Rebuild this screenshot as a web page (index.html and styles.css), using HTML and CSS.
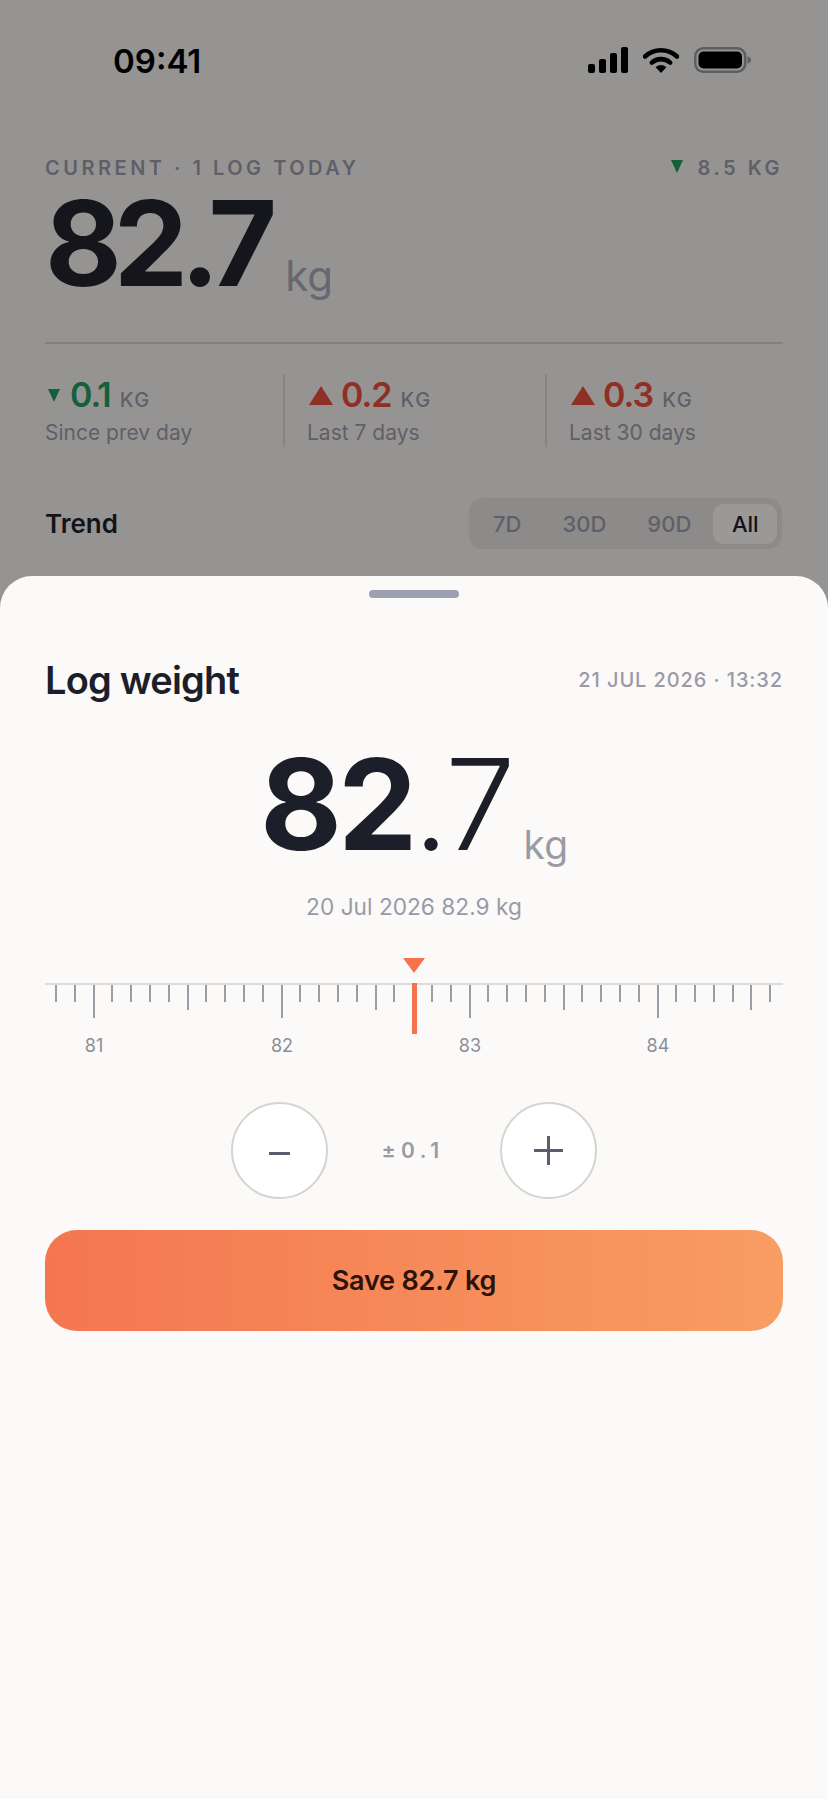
FILE: index.html
```html
<!DOCTYPE html>
<html lang="en">
  <head>
    <meta charset="UTF-8" />
    <meta name="viewport" content="width=device-width, initial-scale=1.0" />
    <title>Log weight</title>
    <link rel="stylesheet" href="styles.css">
  </head>
  <body>
    <div class="behind">
      <div class="status">
        <span class="time">09:41</span>
        <div class="status-icons">
          <svg class="signal" width="40" height="26" viewBox="0 0 40 26">
            <rect x="0" y="17" width="7" height="9" rx="2" />
            <rect x="11" y="12" width="7" height="14" rx="2" />
            <rect x="22" y="6" width="7" height="20" rx="2" />
            <rect x="33" y="0" width="7" height="26" rx="2" />
          </svg>
          <svg class="wifi" width="36" height="26" viewBox="0 0 36 26">
            <path d="M2 9.5C11 1.2 25 1.2 34 9.5" fill="none" stroke="#000" stroke-width="4.6" stroke-linecap="round" />
            <path d="M8.8 15.6C14 11 22 11 27.2 15.6" fill="none" stroke="#000" stroke-width="4.6" stroke-linecap="round" />
            <path d="M12.6 20.2C16 17.2 20 17.2 23.4 20.2L18 26Z" />
          </svg>
          <svg class="battery" width="57" height="26" viewBox="0 0 57 26">
            <rect x="1.25" y="1.25" width="50" height="23.5" rx="8" fill="none" stroke="#5e5e5e" stroke-width="2.5" />
            <rect x="4.5" y="4.5" width="43.5" height="17" rx="5" />
            <path d="M53.5 9.5C56 10 57 11.5 57 13C57 14.5 56 16 53.5 16.5Z" fill="#5e5e5e" />
          </svg>
        </div>
      </div>

      <div class="current-head">
        <span class="eyebrow">CURRENT · 1 LOG TODAY</span>
        <span class="eyebrow goal"><i class="tri-down small"></i>8.5 KG</span>
      </div>
      <div class="current">
        <span class="current-value">82.7</span><span class="current-unit">kg</span>
      </div>

      <div class="stats">
        <div class="stat">
          <div class="stat-value down"><i class="tri-down"></i>0.1<span class="stat-unit">KG</span></div>
          <div class="stat-label">Since prev day</div>
        </div>
        <div class="stat">
          <div class="stat-value up"><i class="tri-up"></i>0.2<span class="stat-unit">KG</span></div>
          <div class="stat-label">Last 7 days</div>
        </div>
        <div class="stat">
          <div class="stat-value up"><i class="tri-up"></i>0.3<span class="stat-unit">KG</span></div>
          <div class="stat-label">Last 30 days</div>
        </div>
      </div>

      <div class="trend">
        <span class="trend-title">Trend</span>
        <div class="range">
          <span>7D</span>
          <span>30D</span>
          <span>90D</span>
          <span class="active">All</span>
        </div>
      </div>
    </div>

    <div class="sheet">
      <div class="handle"></div>
      <div class="sheet-head">
        <h1>Log weight</h1>
        <span class="stamp">21 JUL 2026 · 13:32</span>
      </div>
      <div class="reading">
        <span class="whole">82</span><span class="fraction">.7</span><span class="reading-unit">kg</span>
      </div>
      <p class="previous">20 Jul 2026 82.9 kg</p>

      <div class="ruler">
        <i class="pointer-head"></i>
        <i class="pointer-bar"></i>
        <div class="ticks">
          <i></i><i></i><i class="long"></i><i></i><i></i><i></i><i></i><i class="mid"></i><i></i><i></i>
          <i></i><i></i><i class="long"></i><i></i><i></i><i></i><i></i><i class="mid"></i><i></i><i></i>
          <i></i><i></i><i class="long"></i><i></i><i></i><i></i><i></i><i class="mid"></i><i></i><i></i>
          <i></i><i></i><i class="long"></i><i></i><i></i><i></i><i></i><i class="mid"></i><i></i>
        </div>
        <div class="ruler-labels">
          <span>81</span>
          <span>82</span>
          <span>83</span>
          <span>84</span>
        </div>
      </div>

      <div class="stepper">
        <button class="step minus"><i></i></button>
        <span class="step-size">±0.1</span>
        <button class="step plus"><i></i><i></i></button>
      </div>

      <button class="save">Save 82.7 kg</button>
    </div>
  </body>
</html>
```

FILE: styles.css
```css
* {
  margin: 0;
  padding: 0;
  box-sizing: border-box;
}
html,
body {
  width: 100%;
  height: 100%;
  background: #959492;
  font-family: Inter, "Liberation Sans", sans-serif;
}
body {
  display: flex;
  flex-direction: column;
  height: 1799px;
  overflow: hidden;
}
i {
  display: block;
}
.behind {
  padding: 47px 45px 0;
  height: 576px;
  flex: none;
}
.status {
  display: flex;
  justify-content: space-between;
  height: 26px;
  padding-left: 68px;
}
.time {
  font-size: 33px;
  line-height: 28px;
  font-weight: 600;
  color: #000;
}
.status-icons {
  display: flex;
  gap: 15px;
  padding-right: 32px;
  margin-left: auto;
}
.eyebrow {
  font-size: 20px;
  line-height: 20px;
  font-weight: 600;
  letter-spacing: 3.5px;
  color: #5f5f69;
  display: flex;
  align-items: center;
}
.current-head {
  display: flex;
  justify-content: space-between;
  margin-top: 85px;
}
.goal {
  gap: 15px;
}
.current {
  margin-top: 20px;
  border-bottom: 2px solid #828180;
  height: 146px;
  line-height: 90px;
  white-space: nowrap;
}
.current-value {
  display: inline-block;
  font-size: 118px;
  font-weight: 700;
  letter-spacing: -8px;
  color: #15151c;
}
.current-unit {
  font-size: 42px;
  font-weight: 400;
  color: #666771;
  margin-left: 16px;
  vertical-align: -5px;
}
.stats {
  display: grid;
  grid-template-columns: 238px 262px 238px;
  margin-top: 30px;
  height: 70px;
}
.stat {
  border-left: 2px solid #868584;
  padding-left: 22px;
}
.stat:first-child {
  border-left: 0;
  padding-left: 0;
}
.stat-value {
  display: flex;
  align-items: baseline;
  height: 38px;
  font-size: 34px;
  line-height: 38px;
  font-weight: 600;
  letter-spacing: -1px;
  margin-top: 2px;
}
.down {
  color: #15603a;
}
.up {
  color: #8f2f25;
}
.stat-unit {
  font-size: 20px;
  line-height: 20px;
  font-weight: 500;
  letter-spacing: 1.6px;
  color: #5f5f69;
  margin-left: 9px;
}
.stat-label {
  margin-top: 5px;
  font-size: 21px;
  line-height: 28px;
  color: #5f5f69;
}
.tri-down {
  width: 0;
  height: 0;
  border-left: 6.5px solid transparent;
  border-right: 6.5px solid transparent;
  border-top: 13px solid #15603a;
  margin: 0 10px 0 3px;
  align-self: center;
}
.tri-down.small {
  margin: 0 0 4px;
}
.tri-up {
  width: 0;
  height: 0;
  border-left: 12px solid transparent;
  border-right: 12px solid transparent;
  border-bottom: 19px solid #8f2f25;
  margin: 0 8px 0 2px;
  align-self: center;
}
.trend {
  display: flex;
  justify-content: space-between;
  align-items: center;
  margin-top: 54px;
  height: 51px;
}
.trend-title {
  font-size: 26px;
  font-weight: 600;
  color: #131318;
}
.range {
  display: flex;
  align-items: center;
  gap: 41px;
  width: 313px;
  height: 51px;
  padding: 5px 5px 5px 24px;
  margin-right: 1px;
  background: #8c8b89;
  border-radius: 14px;
}
.range span {
  flex: none;
  font-size: 22px;
  font-weight: 500;
  color: #5f5f69;
}
.range .active {
  width: 64px;
  height: 40px;
  line-height: 40px;
  margin-left: -19px;
  text-align: center;
  background: #9a9997;
  border-radius: 11px;
  color: #131318;
}
.sheet {
  flex: 1;
  background: #fbfaf8;
  border-radius: 32px 32px 0 0;
  padding: 14px 45px 0;
}
.handle {
  width: 90px;
  height: 8px;
  margin: 0 auto;
  background: #9ba1b1;
  border-radius: 4px;
}
.sheet-head {
  display: flex;
  justify-content: space-between;
  align-items: center;
  margin-top: 62px;
  height: 40px;
}
h1 {
  font-size: 38px;
  line-height: 40px;
  font-weight: 600;
  letter-spacing: -0.8px;
  color: #1c1f29;
}
.stamp {
  font-size: 20px;
  font-weight: 500;
  letter-spacing: 0.9px;
  color: #9a9aa7;
}
.reading {
  margin-top: 39px;
  height: 130px;
  line-height: 130px;
  text-align: center;
  white-space: nowrap;
  color: #1c1f29;
}
.whole,
.fraction {
  display: inline-block;
  font-size: 126px;
  letter-spacing: -4px;
}
.whole {
  font-weight: 700;
}
.fraction {
  font-weight: 300;
  letter-spacing: -2px;
}
.reading-unit {
  font-size: 39px;
  font-weight: 400;
  color: #9a9aa7;
  margin-left: 10px;
  vertical-align: -9px;
}
.previous {
  margin-top: 24px;
  font-size: 22.7px;
  line-height: 28px;
  text-align: center;
  color: #9a9aa7;
}
.ruler {
  position: relative;
  margin-top: 37px;
  padding-top: 25px;
}
.pointer-head {
  position: absolute;
  left: 358px;
  top: 0;
  width: 0;
  height: 0;
  border-left: 11.5px solid transparent;
  border-right: 11.5px solid transparent;
  border-top: 15px solid #f4734d;
}
.pointer-bar {
  position: absolute;
  left: 367px;
  top: 25px;
  width: 5px;
  height: 51px;
  background: #f4734d;
}
.ticks {
  display: flex;
  height: 35px;
  padding-left: 10px;
  border-top: 2px solid #dddcda;
}
.ticks i {
  flex: 0 0 18.8px;
  height: 17px;
  background: linear-gradient(#9a9ca8, #9a9ca8) no-repeat left top / 2px 100%;
}
.ticks .mid {
  height: 25px;
}
.ticks .long {
  height: 33px;
}
.ruler-labels {
  display: flex;
  margin: 16px -45px 0;
}
.ruler-labels span {
  flex: 0 0 188px;
  text-align: center;
  font-size: 18px;
  line-height: 24px;
  color: #8c8d99;
}
.stepper {
  display: flex;
  align-items: center;
  justify-content: center;
  margin-top: 44px;
}
.step {
  position: relative;
  width: 97px;
  height: 97px;
  border: 2px solid #d5d4d1;
  border-radius: 50%;
  background: #fff;
}
.step i {
  position: absolute;
  background: #5a5d70;
}
.minus i {
  left: 36px;
  top: 48px;
  width: 21px;
  height: 3px;
}
.plus i:first-child {
  left: 32px;
  top: 45px;
  width: 29px;
  height: 3px;
}
.plus i:last-child {
  left: 45px;
  top: 32px;
  width: 3px;
  height: 29px;
}
.step-size {
  width: 172px;
  padding-right: 2px;
  text-align: center;
  font-size: 21px;
  font-weight: 600;
  letter-spacing: 5.5px;
  color: #9a9aa7;
}
.save {
  display: block;
  width: 738px;
  height: 101px;
  margin-top: 31px;
  border: 0;
  border-radius: 32px;
  background: linear-gradient(90deg, #f47650, #f89d63);
  font-family: inherit;
  font-size: 27px;
  font-weight: 600;
  letter-spacing: -0.2px;
  color: #2e120a;
}
```
